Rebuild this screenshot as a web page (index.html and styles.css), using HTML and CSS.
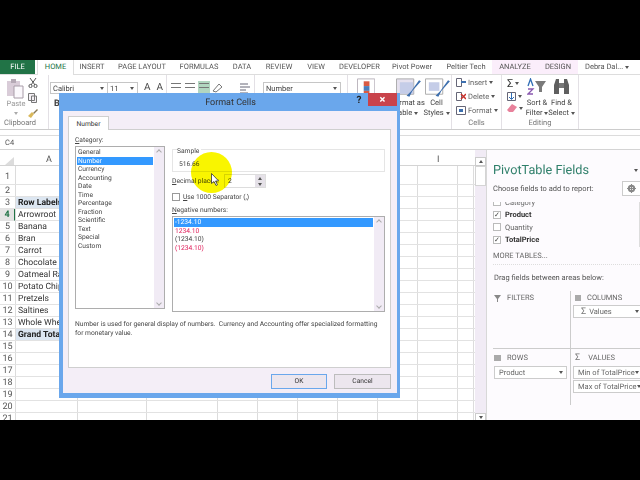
FILE: index.html
```html
<!DOCTYPE html>
<html lang="en">
<head>
    <meta charset="UTF-8">
    <title>Format Cells</title>
    <link rel="stylesheet" href="styles.css">
</head>
<body>
<div class="app">

    <!-- tab strip -->
    <div class="tabs">
        <span class="tab file">FILE</span>
        <span class="tab home">HOME</span>
        <span class="tab t-insert">INSERT</span>
        <span class="tab t-page">PAGE LAYOUT</span>
        <span class="tab t-formulas">FORMULAS</span>
        <span class="tab t-data">DATA</span>
        <span class="tab t-review">REVIEW</span>
        <span class="tab t-view">VIEW</span>
        <span class="tab t-dev">DEVELOPER</span>
        <span class="tab t-pivot">Pivot Power</span>
        <span class="tab t-peltier">Peltier Tech</span>
        <span class="tab tool t-analyze">ANALYZE</span>
        <span class="tab tool t-design">DESIGN</span>
        <span class="tab user">Debra Dal... <i class="down"></i></span>
    </div>

    <!-- ribbon -->
    <div class="ribbon">
        <div class="group g-clip">
            <div class="group-body clip-body">
                <div class="paste">
                    <svg width="20" height="21" viewBox="0 0 20 21"><path d="M1 3h13v15H1z" fill="#d9ccd8"/><path d="M5 1h5v4H5z" fill="#b5a9b5"/><path d="M8 8h9v12H8z" fill="#fbf8fc" stroke="#a89ca8"/></svg>
                    <span>Paste</span>
                    <i class="down"></i>
                </div>
                <div class="clip-icons">
                    <svg width="10" height="10" viewBox="0 0 10 10"><path d="M2 0l5 7M8 0L3 7" stroke="#555" fill="none"/><circle cx="2.500" cy="8" r="1.600" fill="none" stroke="#555"/><circle cx="7.500" cy="8" r="1.600" fill="none" stroke="#555"/></svg>
                    <svg width="13" height="10" viewBox="0 0 13 10"><path d="M.5.5h6v7h-6zM3.500 3h5v6.500h-5z" fill="#f4f0f5" stroke="#777"/></svg>
                    <svg width="10" height="10" viewBox="0 0 10 10"><path d="M5 5l4-4 1 1-4 4z" fill="#8a7a55"/><path d="M0 8l4-4 2 2-3 4z" fill="#d9b85a"/></svg>
                </div>
            </div>
            <div class="group-label">Clipboard</div>
        </div>
        <div class="group g-font">
            <div class="font-row">
                <span class="select font-name">Calibri<i class="down"></i></span>
                <span class="select font-size">11<i class="down"></i></span>
                <span class="grow-a">A</span>
                <span class="grow-a small">A</span>
            </div>
            <b class="bold-b">B</b>
        </div>
        <div class="group g-align">
            <div class="align-row">
                <span class="align-ico"><i></i><i></i></span>
                <span class="align-ico"><i></i><i></i></span>
                <span class="align-ico on"><i></i><i></i></span>
                <svg width="12" height="10" viewBox="0 0 12 10"><path d="M1 8l6-7 3 3-6 5z" fill="none" stroke="#777"/></svg>
                <svg class="wrap-ico" width="12" height="12" viewBox="0 0 12 12"><path d="M1 2h8M1 5h10M1 8h6M1 11h8" stroke="#667" fill="none"/></svg>
            </div>
        </div>
        <div class="group g-number">
            <span class="select number-fmt">Number<i class="down"></i></span>
        </div>
        <div class="group g-styles">
            <div class="style-icons">
                <svg width="19" height="20" viewBox="0 0 19 20"><path d="M.5.5h18v19H.5z" fill="#fff" stroke="#b9b3bb"/><path d="M7 3h6v5H7z" fill="#d95b43"/><path d="M7 8h6v5H7z" fill="#4a7ebb"/><path d="M7 13h6v5H7z" fill="#d95b43"/></svg>
                <svg class="fmt-table" width="27" height="20" viewBox="0 0 27 20"><path d="M.5.5h18v16H.5z" fill="#e6e2ef" stroke="#aaa"/><path d="M4 4h14v12H4z" fill="#c5cde8"/><path d="M26 3l-9 10-3 6-3-1 5-5 8-11z" fill="#3d6fae"/></svg>
                <svg class="cell-style" width="27" height="20" viewBox="0 0 27 20"><path d="M.5.5h18v16H.5z" fill="#fff" stroke="#aaa"/><path d="M4 4h11v9H4z" fill="#c5cde8"/><path d="M26 3l-9 10-3 6-3-1 5-5 8-11z" fill="#3d6fae"/></svg>
            </div>
            <div class="style-labels">
                <span class="big-label">Format as<br>Table <i class="down"></i></span>
                <span class="big-label">Cell<br>Styles <i class="down"></i></span>
            </div>
        </div>
        <div class="group g-cells">
            <div class="cell-cmds">
                <div class="cmd"><svg width="10" height="9" viewBox="0 0 10 9"><path d="M.5.500h5v8h-5z" fill="#fff" stroke="#667"/><path d="M5 4h5" stroke="#3d6fae" stroke-width="2"/></svg>Insert <i class="down"></i></div>
                <div class="cmd"><svg width="10" height="9" viewBox="0 0 10 9"><path d="M.5.500h5v8h-5z" fill="#fff" stroke="#667"/><path d="M5 2l5 5M10 2L5 7" stroke="#c8312b" stroke-width="1.500"/></svg>Delete <i class="down"></i></div>
                <div class="cmd"><svg width="10" height="9" viewBox="0 0 10 9"><path d="M.5.500h9v8h-9z" fill="#fff" stroke="#667"/><path d="M3 3h4v3H3z" fill="#3d6fae"/></svg>Format <i class="down"></i></div>
            </div>
            <div class="group-label">Cells</div>
        </div>
        <div class="group g-edit">
            <div class="edit-body">
                <div class="edit-icons">
                    <span class="sigma">Σ<i class="down"></i></span>
                    <span class="fill-ico"><svg width="9" height="9" viewBox="0 0 9 9"><path d="M.5.500h8v8h-8z" fill="#fff" stroke="#667"/><path d="M4.500 1v6M2 5l2.500 2.500L7 5" stroke="#2f6db5" fill="none"/></svg><i class="down"></i></span>
                    <span class="fill-ico"><svg width="10" height="8" viewBox="0 0 10 8"><path d="M0 6l5-6 5 3-4 5H2z" fill="#e8819b"/></svg><i class="down"></i></span>
                </div>
                <div class="big-cmd sort-cmd">
                    <svg width="20" height="17" viewBox="0 0 20 17"><path d="M1 8l2.500-7L6 8" fill="none" stroke="#2f6db5" stroke-width="1.300"/><path d="M1 11h5l-5 5h5" fill="none" stroke="#8a5ab0" stroke-width="1.300"/><path d="M8 3h11l-4 6v5h-3V9z" fill="#7a7a7a"/></svg>
                    <span class="big-label">Sort &amp;<br>Filter <i class="down"></i></span>
                </div>
                <div class="big-cmd">
                    <svg width="17" height="17" viewBox="0 0 17 17"><path d="M1 16V7l2-6h3v15zM16 16V7l-2-6h-3v15z" fill="#5f5f5f"/><path d="M6 5h5v5H6z" fill="#777"/></svg>
                    <span class="big-label">Find &amp;<br>Select <i class="down"></i></span>
                </div>
            </div>
            <div class="group-label">Editing</div>
        </div>
    </div>

    <div class="formula-bar"><span class="name-box">C4</span></div>

    <div class="work">
        <div class="sheet">
            <div class="col-head">
                <span class="corner"></span>
                <span class="col-a">A</span>
                <span class="col-i">I</span>
            </div>
            <div class="rows">
                <div class="row first"><span class="num">1</span></div>
                <div class="row"><span class="num">2</span></div>
                <div class="row"><span class="num">3</span><span class="cell total">Row Labels</span></div>
                <div class="row"><span class="num active">4</span><span class="cell">Arrowroot</span></div>
                <div class="row"><span class="num">5</span><span class="cell">Banana</span></div>
                <div class="row"><span class="num">6</span><span class="cell">Bran</span></div>
                <div class="row"><span class="num">7</span><span class="cell">Carrot</span></div>
                <div class="row"><span class="num">8</span><span class="cell">Chocolate Chip</span></div>
                <div class="row"><span class="num">9</span><span class="cell">Oatmeal Raisin</span></div>
                <div class="row"><span class="num">10</span><span class="cell">Potato Chips</span></div>
                <div class="row"><span class="num">11</span><span class="cell">Pretzels</span></div>
                <div class="row"><span class="num">12</span><span class="cell">Saltines</span></div>
                <div class="row"><span class="num">13</span><span class="cell">Whole Wheat</span></div>
                <div class="row"><span class="num">14</span><span class="cell total">Grand Total</span></div>
                <div class="row"><span class="num">15</span></div>
                <div class="row"><span class="num">16</span></div>
                <div class="row"><span class="num">17</span></div>
                <div class="row"><span class="num">18</span></div>
                <div class="row"><span class="num">19</span></div>
                <div class="row"><span class="num">20</span></div>
                <div class="row"><span class="num">21</span></div>
            </div>
        </div>

        <div class="vscroll">
            <span class="arrow-btn"><i class="up"></i></span>
            <span class="thumb"></span>
            <span class="spacer"></span>
            <span class="arrow-btn"><i class="down"></i></span>
        </div>

        <!-- field list pane -->
        <div class="pane">
            <div class="pane-head">
                <h2>PivotTable Fields</h2>
                <i class="down"></i>
            </div>
            <div class="pane-sub">
                <span>Choose fields to add to report:</span>
                <span class="gear"><svg width="9" height="9" viewBox="0 0 9 9"><circle cx="4.500" cy="4.500" r="2.700" fill="none" stroke="#888" stroke-width="2"/><path d="M4.500 0v9M0 4.500h9" stroke="#888"/></svg></span>
            </div>
            <div class="fields">
                <div class="field clipped"><span class="check"></span>Category</div>
                <div class="field on"><span class="check">✓</span>Product</div>
                <div class="field"><span class="check"></span>Quantity</div>
                <div class="field on"><span class="check">✓</span>TotalPrice</div>
            </div>
            <div class="more">MORE TABLES...</div>
            <div class="drag">Drag fields between areas below:</div>
            <div class="areas">
                <div class="area a-filters">
                    <div class="area-title"><svg width="7" height="7" viewBox="0 0 7 7"><path d="M0 0h7L4 4v3H3V4z" fill="#888"/></svg>FILTERS</div>
                </div>
                <div class="area a-columns">
                    <div class="area-title"><svg width="6" height="6" viewBox="0 0 6 6"><path d="M0 0h6v6H0z" fill="#aaa"/></svg>COLUMNS</div>
                    <div class="pill"><span class="sig">Σ</span> Values<i class="down"></i></div>
                </div>
                <div class="area a-rows">
                    <div class="area-title"><svg width="7" height="6" viewBox="0 0 7 6"><path d="M0 0h7v6H0z" fill="#aaa"/></svg>ROWS</div>
                    <div class="pill">Product<i class="down"></i></div>
                </div>
                <div class="area a-values">
                    <div class="area-title"><span class="sig">Σ</span>VALUES</div>
                    <div class="pill">Min of TotalPrice<i class="down"></i></div>
                    <div class="pill">Max of TotalPrice<i class="down"></i></div>
                </div>
            </div>
        </div>
    </div>

    <!-- Format Cells dialog -->
    <div class="dialog">
        <div class="dlg-title">
            <span class="dlg-name">Format Cells</span>
            <span class="dlg-help">?</span>
            <span class="dlg-close">×</span>
        </div>
        <div class="dlg-inner">
            <div class="dlg-tabs"><span class="dlg-tab">Number</span></div>
            <div class="dlg-panel">
                <div class="dlg-cols">
                    <div class="cat-col">
                        <div class="lbl"><u>C</u>ategory:</div>
                        <div class="list cat-list">
                            <div class="items">
                                <div>General</div>
                                <div class="sel">Number</div>
                                <div>Currency</div>
                                <div>Accounting</div>
                                <div>Date</div>
                                <div>Time</div>
                                <div>Percentage</div>
                                <div>Fraction</div>
                                <div>Scientific</div>
                                <div>Text</div>
                                <div>Special</div>
                                <div>Custom</div>
                            </div>
                            <div class="list-scroll"><i class="chev-up"></i><i class="chev-down"></i></div>
                        </div>
                    </div>
                    <div class="opt-col">
                        <div class="sample">
                            <span class="sample-lbl">Sample</span>
                            <span class="sample-val">516.66</span>
                        </div>
                        <div class="decimals">
                            <span class="dec-lbl"><u>D</u>ecimal places:</span>
                            <span class="spin"><span class="spin-val">2</span><span class="spin-btns"><i class="up"></i><i class="down"></i></span></span>
                        </div>
                        <div class="sep-row"><span class="box"></span><span><u>U</u>se 1000 Separator (,)</span></div>
                        <div class="lbl neg-lbl"><u>N</u>egative numbers:</div>
                        <div class="list neg-list">
                            <div class="items">
                                <div class="sel">-1234.10</div>
                                <div class="red">1234.10</div>
                                <div>(1234.10)</div>
                                <div class="red">(1234.10)</div>
                            </div>
                            <div class="list-scroll"><i class="chev-up"></i><i class="chev-down"></i></div>
                        </div>
                    </div>
                </div>
                <p class="dlg-desc">Number is used for general display of numbers.  Currency and Accounting offer specialized formatting<br>for monetary value.</p>
            </div>
            <div class="dlg-btns">
                <span class="btn default">OK</span>
                <span class="btn">Cancel</span>
            </div>
        </div>
    </div>

    <!-- presenter's pointer highlight -->
    <span class="spot"></span>
    <svg class="pointer" width="9" height="13" viewBox="0 0 9 13"><path d="M.5.500v10l2.500-2 2 4 1.500-.7-2-3.800h3.200z" fill="#fff" stroke="#333" stroke-width=".8"/></svg>
</div>
</body>
</html>
```

FILE: styles.css
```css
* {
    margin: 0;
    padding: 0;
    box-sizing: border-box;
}

html, body {
    width: 640px;
    height: 480px;
    background: #000;
    overflow: hidden;
}

body {
    padding-top: 60px;
    font-family: Roboto, "Liberation Sans", sans-serif;
    font-size: 7.5px;
    color: #444;
    text-rendering: geometricPrecision;
}

i {
    font-style: normal;
}

.app {
    position: relative;
    width: 640px;
    height: 360px;
    background: #fff;
    overflow: hidden;
    filter: blur(0.3px);
}

.down, .up {
    display: inline-block;
    width: 0;
    height: 0;
    border-left: 2.5px solid transparent;
    border-right: 2.5px solid transparent;
    vertical-align: middle;
}

.down {
    border-top: 3px solid #555;
}

.up {
    border-bottom: 3px solid #555;
}

/* tabs */
.tabs {
    display: flex;
    height: 14px;
    line-height: 14px;
    color: #555;
    white-space: nowrap;
}

.tab {
    display: block;
    text-align: center;
    flex: none;
}

.tab.file {
    width: 35px;
    background: #217346;
    color: #fff;
}

.tab.home {
    width: 37px;
    margin-left: 2px;
    margin-right: 1px;
    color: #217346;
    border-left: 1px solid #ddd;
    border-right: 1px solid #ddd;
    height: 15px;
    background: #fff;
    position: relative;
    z-index: 1;
}

.t-insert { width: 34px; }
.t-page { width: 66px; }
.t-formulas { width: 48px; }
.t-data { width: 38px; }
.t-review { width: 36px; }
.t-view { width: 38px; }
.t-dev { width: 49px; }
.t-pivot { width: 56px; }
.t-peltier { width: 52px; }
.t-analyze { width: 46px; }
.t-design { width: 40px; }

.tab.tool {
    background: #fbeefb;
}

.tab.user {
    margin-left: 7px;
    color: #555;
}

/* ribbon */
.ribbon {
    display: flex;
    height: 56px;
    background: #fff;
    border-top: 1px solid #ddd;
    border-bottom: 1px solid #ccc;
}

.group {
    flex: none;
    height: 100%;
    border-right: 1px solid #e3e0e5;
    display: flex;
    flex-direction: column;
    position: relative;
}

.group-label {
    margin-top: auto;
    height: 11px;
    line-height: 10px;
    text-align: center;
    color: #777;
}

.g-clip { width: 49px; }
.g-clip .group-label { text-align: left; padding-left: 4px; }
.g-font { width: 118px; padding: 7px 0 0 1px; }
.g-align { width: 88px; padding: 6px 0 0 3px; }
.g-number { width: 93px; padding: 7px 0 0 8px; }
.g-styles { width: 104px; padding: 3px 0 0 9px; }
.g-cells { width: 50px; }
.g-edit { width: 77px; }

.clip-body {
    display: flex;
    padding: 3px 0 0 6px;
}

.paste {
    width: 20px;
    display: flex;
    flex-direction: column;
    align-items: center;
    line-height: 9px;
    color: #999;
}

.paste .down {
    margin-top: 4px;
    border-top-color: #aaa;
}

.clip-icons {
    display: flex;
    flex-direction: column;
    gap: 5px;
    padding-left: 2px;
}

.font-row {
    display: flex;
    align-items: center;
}

.select {
    display: flex;
    align-items: center;
    justify-content: space-between;
    height: 12px;
    padding: 0 3px 0 2px;
    background: #fff;
    border: 1px solid #c6c6c6;
    color: #444;
}

.font-name { width: 58px; }
.font-size { width: 30px; border-left: 0; }
.number-fmt { width: 78px; }

.grow-a {
    margin-left: 6px;
    font-size: 10px;
    line-height: 12px;
}

.bold-b {
    display: block;
    margin: 5px 0 0 4px;
    font-size: 9px;
    color: #444;
}

.align-row {
    display: flex;
    align-items: center;
    gap: 2px;
}

.align-ico {
    display: flex;
    flex-direction: column;
    gap: 3px;
    width: 12px;
    height: 13px;
    padding: 2px 1px;
}

.align-ico i {
    height: 1px;
    background: #777;
}

.align-ico.on {
    background: #b2d6c0;
}

.wrap-ico {
    margin-left: 13px;
}

.style-icons {
    display: flex;
    align-items: flex-start;
}

.fmt-table { margin-left: 21px; }
.cell-style { margin-left: 3px; }

.style-labels {
    display: flex;
    gap: 1px;
    padding-left: 34px;
}

.style-labels .big-label {
    width: 30px;
}

.big-label {
    display: block;
    text-align: center;
    line-height: 10px;
    white-space: nowrap;
}

.big-label .down {
    border-left-width: 2px;
    border-right-width: 2px;
}

.cell-cmds {
    padding: 0 0 0 4px;
}

.cmd {
    display: flex;
    align-items: center;
    gap: 2px;
    height: 14px;
    white-space: nowrap;
    color: #666;
}

.edit-body {
    display: flex;
    padding: 3px 0 0 5px;
}

.edit-icons {
    display: flex;
    flex-direction: column;
    width: 19px;
    gap: 2px;
}

.sigma {
    display: flex;
    align-items: center;
    gap: 2px;
    height: 11px;
    font-size: 11px;
    color: #333;
}

.fill-ico {
    display: flex;
    align-items: center;
    gap: 2px;
    height: 10px;
}

.edit-icons .down, .cmd .down {
    border-left-width: 2px;
    border-right-width: 2px;
}

.big-cmd {
    display: flex;
    flex-direction: column;
    align-items: center;
    gap: 3px;
    width: 27px;
    white-space: nowrap;
}

.sort-cmd {
    width: 22px;
}

/* formula bar */
.formula-bar {
    height: 20px;
    padding-top: 5px;
    border-bottom: 1px solid #d4d4d4;
    background: #fff;
}

.name-box {
    display: block;
    height: 14px;
    line-height: 10px;
    padding-left: 5px;
    border-top: 1px solid #dcdcdc;
    padding-top: 2px;
    color: #555;
}

/* sheet */
.work {
    display: flex;
    height: 270px;
}

.sheet {
    width: 475px;
    flex: none;
    font-size: 8.6px;
}

.col-head {
    display: flex;
    height: 16px;
    line-height: 21px;
    background: #fff;
    border-bottom: 1px solid #d4d4d4;
    font-size: 9px;
    color: #555;
    position: relative;
}

.corner {
    width: 0;
    height: 0;
    margin: 7px 0 0 5px;
    border-left: 9px solid transparent;
    border-bottom: 8px solid #dcdcdc;
}

.col-a {
    margin-left: 32px;
}

.col-i {
    margin-left: 385px;
}

.rows {
    /* gridlines: column edges of the sheet */
    background:
        linear-gradient(#dcdcdc, #dcdcdc) 15px 0 / 1px 100% no-repeat,
        linear-gradient(#dcdcdc, #dcdcdc) 77px 0 / 1px 100% no-repeat,
        linear-gradient(#dcdcdc, #dcdcdc) 146px 0 / 1px 100% no-repeat,
        linear-gradient(#dcdcdc, #dcdcdc) 217px 0 / 1px 100% no-repeat,
        linear-gradient(#dcdcdc, #dcdcdc) 257px 0 / 1px 100% no-repeat,
        linear-gradient(#dcdcdc, #dcdcdc) 297px 0 / 1px 100% no-repeat,
        linear-gradient(#dcdcdc, #dcdcdc) 337px 0 / 1px 100% no-repeat,
        linear-gradient(#dcdcdc, #dcdcdc) 377px 0 / 1px 100% no-repeat,
        linear-gradient(#dcdcdc, #dcdcdc) 417px 0 / 1px 100% no-repeat,
        linear-gradient(#dcdcdc, #dcdcdc) 457px 0 / 1px 100% no-repeat,
        linear-gradient(#dcdcdc, #dcdcdc) 473px 0 / 1px 100% no-repeat;
}

.row {
    display: flex;
    height: 12px;
    line-height: 13px;
    border-bottom: 1px solid #e2e2e2;
}

.row.first {
    height: 19px;
    line-height: 23px;
}

.num {
    width: 15px;
    flex: none;
    text-align: center;
    background: #fff;
    color: #555;
    font-size: 9px;
    border-bottom: 1px solid #e2e2e2;
    height: 12px;
}

.first .num {
    height: 19px;
}

.num.active {
    background: #e4e4e4;
    color: #217346;
    font-weight: 700;
    border-right: 1px solid #217346;
}

.cell {
    width: 60px;
    margin-left: 3px;
    white-space: nowrap;
    color: #333;
}

.cell.total {
    margin-left: 1px;
    padding-left: 2px;
    width: 45px;
    font-weight: 700;
    background: #dce6f1;
    color: #222;
}

/* sheet scrollbar */
.vscroll {
    width: 12px;
    flex: none;
    display: flex;
    flex-direction: column;
    background: #f1ebf5;
    border-right: 1px solid #d8d8d8;
}

.arrow-btn {
    display: flex;
    align-items: center;
    justify-content: center;
    height: 9px;
    background: #fff;
    border: 1px solid #ccc;
}

.vscroll .arrow-btn:first-child {
    margin-top: 7px;
}

.vscroll .arrow-btn:last-child {
    margin-bottom: -2px;
}

.thumb {
    height: 20px;
    background: #fff;
    border: 1px solid #d4d4d4;
}

.spacer {
    flex: 1;
}

/* pane */
.pane {
    width: 153px;
    flex: none;
    padding: 10px 0 0 6px;
    background: #fdfbfe;
    overflow: hidden;
}

.pane-head {
    display: flex;
    align-items: center;
    justify-content: space-between;
    height: 20px;
    padding-right: 2px;
}

.pane-head h2 {
    font-size: 12.7px;
    font-weight: 400;
    color: #2f7f6a;
    white-space: nowrap;
}

.pane-sub {
    display: flex;
    align-items: center;
    justify-content: space-between;
    height: 15px;
    margin-top: 1px;
    color: #555;
    white-space: nowrap;
}

.gear {
    display: flex;
    align-items: center;
    justify-content: center;
    width: 18px;
    height: 15px;
    background: #fff;
    border: 1px solid #ccc;
    border-right: 0;
}

.fields {
    height: 45px;
    margin-top: 6px;
    overflow: hidden;
    border-right: 1px solid #ddd;
}

.field {
    display: flex;
    align-items: center;
    gap: 4px;
    height: 12.500px;
    color: #666;
    white-space: nowrap;
}

.field.clipped {
    margin-top: -6px;
}

.field.on {
    font-weight: 700;
    color: #333;
}

.check {
    display: flex;
    align-items: center;
    justify-content: center;
    width: 8px;
    height: 8px;
    background: #fff;
    border: 1px solid #bbb;
    font-size: 7px;
    font-weight: 400;
    color: #444;
}

.more {
    height: 16px;
    line-height: 16px;
    margin-top: 1px;
    color: #666;
}

.drag {
    height: 22px;
    padding: 6px 0 0 1px;
    border-top: 1px dotted #ddd;
    line-height: 14px;
    color: #555;
}

.areas {
    display: grid;
    grid-template-columns: 77px 80px;
    grid-template-rows: 57px 57px;
    margin-top: 5px;
}

.area {
    padding-left: 1px;
}

.a-columns, .a-values {
    padding-left: 2px;
    border-left: 1px solid #ccc;
}

.a-rows, .a-values {
    border-top: 1px solid #ccc;
}

.area-title {
    display: flex;
    align-items: center;
    gap: 6px;
    height: 14px;
    line-height: 14px;
    color: #666;
    white-space: nowrap;
}

.a-rows .area-title, .a-values .area-title {
    height: 17px;
}

.a-columns .area-title, .a-values .area-title {
    padding-left: 2px;
}

.pill {
    display: flex;
    align-items: center;
    height: 13px;
    margin-bottom: 1px;
    padding: 0 3px 0 4px;
    background: #fff;
    border: 1px solid #ccc;
    color: #666;
    white-space: nowrap;
}

.pill .down {
    margin-left: auto;
}

.a-rows .pill {
    width: 73px;
}

.a-columns .pill, .a-values .pill {
    width: 70px;
}

.sig {
    font-size: 9px;
    color: #777;
    margin-right: 2px;
}

.a-columns .pill .sig {
    margin: 0 3px 0 3px;
}

/* dialog */
.dialog {
    position: absolute;
    left: 59px;
    top: 33px;
    width: 341px;
    height: 305px;
    background: #6aa7ec;
    border-style: solid;
    border-color: #6aa7ec;
    border-width: 0 3px 5px 4px;
    display: flex;
    flex-direction: column;
    font-size: 6.7px;
}

.dlg-title {
    display: flex;
    align-items: flex-start;
    height: 18px;
    flex: none;
}

.dlg-name {
    flex: 1;
    padding-top: 1px;
    line-height: 18px;
    font-size: 9px;
    color: #333;
    text-align: center;
    padding-left: 48px;
}

.dlg-help {
    width: 18px;
    text-align: center;
    font-size: 10px;
    font-weight: 700;
    line-height: 15px;
    color: #222;
}

.dlg-close {
    width: 29px;
    height: 13px;
    line-height: 13px;
    background: #c9434b;
    color: #fff;
    text-align: center;
    font-size: 11px;
    font-weight: 700;
}

.dlg-inner {
    flex: 1;
    background: #f4eef7;
    padding: 5px 6px 0 5px;
    display: flex;
    flex-direction: column;
}

.dlg-tabs {
    height: 13px;
    flex: none;
    position: relative;
    z-index: 1;
}

.dlg-tab {
    display: block;
    width: 41px;
    height: 14px;
    line-height: 14px;
    text-align: center;
    background: #fff;
    border: 1px solid #cfcfcf;
    border-bottom: 0;
    color: #333;
}

.dlg-panel {
    height: 239px;
    flex: none;
    padding: 5px 5px 0 6px;
    background: #fff;
    border: 1px solid #cfcfcf;
}

.dlg-cols {
    display: flex;
    gap: 7px;
}

.lbl {
    height: 11px;
    line-height: 10px;
    color: #444;
}

.cat-col {
    width: 90px;
    flex: none;
}

.opt-col {
    width: 213px;
    flex: none;
    padding-top: 14px;
}

.list {
    display: flex;
    background: #fff;
    border: 1px solid #adadad;
    color: #444;
    line-height: 8.500px;
}

.cat-list {
    height: 163px;
}

.neg-list {
    height: 96px;
}

.items {
    flex: 1;
    padding: 1px 1px 0;
    min-width: 0;
}

.items div {
    padding-left: 1px;
    height: 8.500px;
    white-space: nowrap;
}

.items .sel {
    background: #3399ff;
    color: #fff;
}

.items .red {
    color: #e0245e;
}

.list-scroll {
    width: 10px;
    flex: none;
    display: flex;
    flex-direction: column;
    justify-content: space-between;
    align-items: center;
    padding: 3px 0;
    background: #f1ebf5;
}

.chev-up, .chev-down {
    width: 4px;
    height: 4px;
    border-left: 1px solid #aaa;
    border-top: 1px solid #aaa;
    transform: rotate(45deg);
}

.chev-down {
    transform: rotate(225deg);
}

.sample {
    display: flex;
    flex-direction: column;
    height: 23px;
    padding: 0 0 0 4px;
    border: 1px solid #e5e5e5;
    line-height: 9px;
}

.sample-lbl {
    margin-top: -3px;
    background: #fff;
    align-self: flex-start;
    padding-right: 2px;
}

.sample-val {
    margin-top: 4px;
    padding-left: 2px;
}

.decimals {
    display: flex;
    align-items: center;
    height: 14px;
    margin-top: 2px;
}

.dec-lbl {
    width: 52px;
    white-space: nowrap;
}

.spin {
    display: flex;
    align-items: center;
    width: 42px;
    height: 14px;
    background: #fff;
    border: 1px solid #ddd;
}

.spin-val {
    flex: 1;
    padding-left: 3px;
}

.spin-btns {
    display: flex;
    flex-direction: column;
    align-items: center;
    justify-content: space-around;
    width: 10px;
    height: 12px;
    background: #e5e1e8;
}

.spin-btns .up, .spin-btns .down {
    border-left-width: 2px;
    border-right-width: 2px;
}

.sep-row {
    display: flex;
    align-items: center;
    gap: 3px;
    height: 9px;
    margin-top: 4px;
}

.box {
    width: 8px;
    height: 8px;
    background: #fff;
    border: 1px solid #999;
}

.neg-lbl {
    margin-top: 4px;
}

.dlg-desc {
    margin-top: 8px;
    line-height: 9px;
    color: #444;
    white-space: pre;
}

.dlg-btns {
    display: flex;
    justify-content: flex-end;
    gap: 7px;
    margin-top: 6px;
}

.btn {
    display: block;
    width: 57px;
    height: 15px;
    line-height: 13px;
    text-align: center;
    background: #ece6ee;
    border: 1px solid #bdbdbd;
    color: #333;
}

.btn.default {
    width: 56px;
    border-color: #6aa7ec;
}

/* pointer highlight */
.spot {
    position: absolute;
    left: 191px;
    top: 92px;
    width: 41px;
    height: 41px;
    border-radius: 50%;
    background: #f9f500;
    mix-blend-mode: multiply;
}

.pointer {
    position: absolute;
    left: 211px;
    top: 113px;
}
```
